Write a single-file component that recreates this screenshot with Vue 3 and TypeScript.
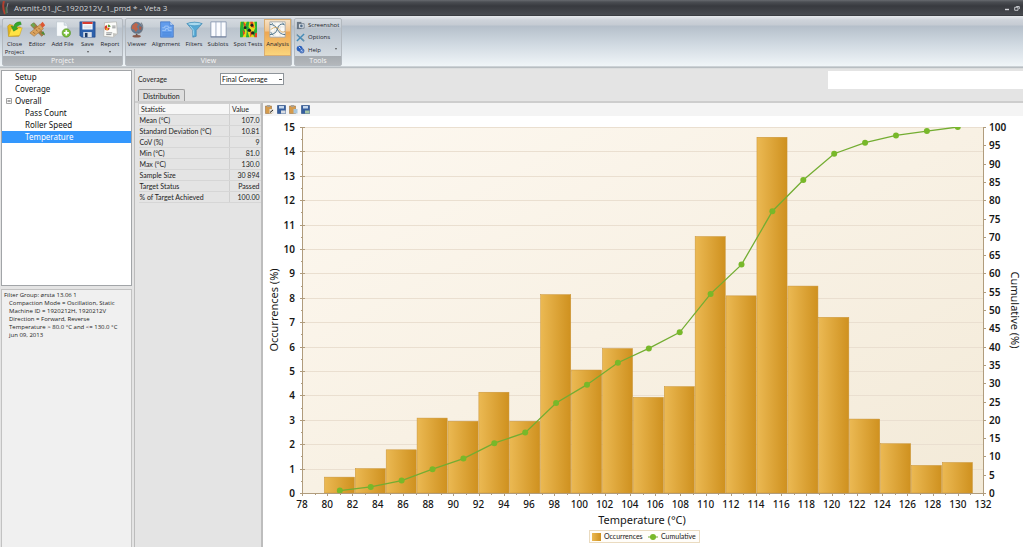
<script setup lang="ts">
import { ref } from 'vue'

interface RibbonItem { id: string; label: string; menu?: boolean }

const projectItems: RibbonItem[] = [
  { id: 'close', label: 'Close Project' },
  { id: 'editor', label: 'Editor' },
  { id: 'add', label: 'Add File' },
  { id: 'save', label: 'Save', menu: true },
  { id: 'report', label: 'Report', menu: true },
]
const viewItems: RibbonItem[] = [
  { id: 'viewer', label: 'Viewer' },
  { id: 'alignment', label: 'Alignment' },
  { id: 'filters', label: 'Filters' },
  { id: 'sublots', label: 'Sublots' },
  { id: 'spot', label: 'Spot Tests' },
  { id: 'analysis', label: 'Analysis' },
]
const groups = [
  { name: 'Project', cls: 'project', items: projectItems },
  { name: 'View', cls: 'view', items: viewItems },
]
const activeView = ref('analysis')

const tree = [
  { label: 'Setup', level: 0 },
  { label: 'Coverage', level: 0 },
  { label: 'Overall', level: 0, open: true },
  { label: 'Pass Count', level: 1 },
  { label: 'Roller Speed', level: 1 },
  { label: 'Temperature', level: 1 },
]
const selected = ref('Temperature')

const filterLines = [
  'Compaction Mode = Oscillation, Static',
  'Machine ID = 1920212H, 1920212V',
  'Direction = Forward, Reverse',
  'Temperature > 80.0 °C and <= 130.0 °C',
  'jun 09, 2013',
]

const stats: [string, string][] = [
  ['Mean (°C)', '107.0'],
  ['Standard Deviation (°C)', '10.81'],
  ['CoV (%)', '9'],
  ['Min (°C)', '81.0'],
  ['Max (°C)', '130.0'],
  ['Sample Size', '30 894'],
  ['Target Status', 'Passed'],
  ['% of Target Achieved', '100.00'],
]

const chartTools = ['Copy chart', 'Save chart', 'Copy data', 'Save data']
const coverage = ref('Final Coverage')

const plot = { left: 39, right: 720, top: 11, bottom: 377 }
const xOf = (t: number) => plot.left + ((t - 78) / 54) * (plot.right - plot.left)
const yOf = (v: number) => plot.bottom - (v / 15) * (plot.bottom - plot.top)
const yCum = (v: number) => plot.bottom - (v / 100) * (plot.bottom - plot.top)

const occurrences = [0.65, 1, 1.77, 3.07, 2.94, 4.13, 2.94, 8.13, 5.04, 5.92, 3.92, 4.36, 10.51, 8.08, 14.58, 8.48, 7.2, 3.03, 2.02, 1.13, 1.25]
const cumulative = [0.65, 1.65, 3.4, 6.5, 9.4, 13.6, 16.5, 24.6, 29.6, 35.6, 39.5, 43.9, 54.4, 62.4, 77, 85.5, 92.7, 95.7, 97.7, 98.9, 100]
const binWidth = 2.45
const bars = occurrences.map((v, i) => {
  const centre = 81 + i * binWidth
  const x = xOf(centre - binWidth / 2)
  return { x, y: yOf(v), w: xOf(centre + binWidth / 2) - x - 0.8, h: plot.bottom - yOf(v) }
})
const points = cumulative.map((v, i) => ({ x: xOf(81 + i * binWidth), y: yCum(v) }))
const linePoints = points.map((p) => `${p.x},${p.y}`).join(' ')
const yTicks = Array.from({ length: 16 }, (_, i) => i)
const cTicks = Array.from({ length: 21 }, (_, i) => i * 5)
const xTicks = Array.from({ length: 28 }, (_, i) => 78 + i * 2)
const snap = (v: number) => Math.round(v) + 0.5
</script>

<template>
  <div class="app">
    <header class="titlebar">
      <svg class="logo" viewBox="0 0 8 14" aria-hidden="true">
        <path d="M2 0 Q0 6 3 13" stroke="#b3402f" stroke-width="2" fill="none" />
        <path d="M6 2 Q4 7 5 12" stroke="#8e9297" fill="none" />
        <path d="M4 6 L4 13" stroke="#3f7d45" fill="none" />
      </svg>
      <span class="title">Avsnitt-01_JC_1920212V_1_pmd * - Veta 3</span>
      <button class="win" aria-label="Minimize"><svg viewBox="0 0 6 6"><path d="M1 4.5H5" stroke="#d4d6da" stroke-width="1.4" /></svg></button>
      <button class="win" aria-label="Restore"><svg viewBox="0 0 6 6"><path d="M2.2 1.5H5.3V4M.7 2.3H4V5.3H.7Z" stroke="#c4c6ca" fill="none" /></svg></button>
    </header>

    <nav class="ribbon">
      <section v-for="g in groups" :key="g.name" class="group">
        <div class="tools" :class="g.cls">
          <button v-for="it in g.items" :key="it.id" class="big" :class="{ active: it.id === activeView }">
            <svg viewBox="0 0 20 20" aria-hidden="true">
              <g v-if="it.id === 'close'">
                <path d="M2 6 4 4 8 5 9 7H17L15 18H3Z" fill="#e6b91d" stroke="#ab851a" stroke-width=".6" />
                <path d="M3 18 6 9 19 8 16 17Z" fill="#ffe345" stroke="#c99d1c" stroke-width=".6" />
                <path d="M17 1Q10 1 9 7L6 6 9 12 14 9 12 8Q13 5 18 4Z" fill="#35a82a" stroke="#1d7a1c" stroke-width=".5" />
              </g>
              <g v-else-if="it.id === 'editor'">
                <path d="M2 5 6 2 18 15 15 18Z" fill="#a9793f" stroke="#78502a" stroke-width=".6" />
                <path d="M1 14 13 4 17 9 6 18Z" fill="#d9a15c" stroke="#9f6a34" stroke-width=".6" />
                <path d="M13 4 16 1 19 5 16 8Z" fill="#dc5732" />
                <path d="M2 4 5 2 8 5 5 8Z" fill="#6fa551" />
                <path d="M14 14 19 17 17 12Z" fill="#4e8c3c" />
                <path d="M5 13 7 15M8 10 10 12M11 8 13 10" stroke="#7a4b25" stroke-width=".8" />
              </g>
              <g v-else-if="it.id === 'add'">
                <path d="M3 1H12L16 5V18H3Z" fill="#f7fafc" stroke="#b4bec8" stroke-width=".7" />
                <path d="M12 1V5H16" fill="#dce5ed" stroke="#b4bec8" stroke-width=".7" />
                <circle cx="14.5" cy="14" r="5" fill="#78bd38" stroke="#4b8d20" stroke-width=".6" />
                <path d="M14.500 11V17M11.500 14H17.500" stroke="#fff" stroke-width="2" />
              </g>
              <g v-else-if="it.id === 'save'">
                <path d="M1 1H19V19H3L1 17Z" fill="#2d60ab" stroke="#1a3e7d" stroke-width=".6" />
                <path d="M4 1H16V10H4Z" fill="#f7f8fa" />
                <path d="M4 1H16V3.500H4Z" fill="#d63b30" />
                <path d="M5.500 6H14.500M5.500 8H14.500" stroke="#bdc7d5" stroke-width=".7" />
                <path d="M5 13H15V19H5Z" fill="#d8e0ea" />
                <path d="M7 14H10V19H7Z" fill="#1c3966" />
              </g>
              <g v-else-if="it.id === 'report'">
                <path d="M3 2 17 1 18 15 13 19 2 18Z" fill="#fbfbf9" stroke="#a9a9a4" stroke-width=".7" />
                <path d="M13 19 13 14 18 15Z" fill="#c3c3bf" />
                <path d="M6 5A3 3 0 1 0 9 8H6Z" fill="#d53b2a" />
                <path d="M7 4A3 3 0 0 1 10 7H7Z" fill="#5b9c38" />
                <path d="M4 9A3 3 0 0 0 7 11V8Z" fill="#e8b42c" />
                <path d="M12 6H16M12 8H16M5 14H12M5 16H11" stroke="#777b7d" />
              </g>
              <g v-else-if="it.id === 'viewer'">
                <path d="M14 2A8 8 0 0 1 11 15" fill="none" stroke="#80868e" stroke-width="1.200" />
                <circle cx="9" cy="8" r="6.500" fill="#667b92" stroke="#46566a" stroke-width=".6" />
                <path d="M4 5 8 2 11 4 9 7 11 9 8 13 6 10 3 9Z" fill="#bd654c" />
                <path d="M12 6 15 7 14 11 12 10Z" fill="#a95b48" />
                <path d="M9 15V18" stroke="#6f5047" stroke-width="2" />
                <ellipse cx="9" cy="18" rx="5" ry="1.500" fill="#88594a" />
              </g>
              <g v-else-if="it.id === 'alignment'">
                <path d="M3 1H14L18 5V19H3Z" fill="#629cec" stroke="#3b70c1" stroke-width=".8" />
                <path d="M14 1V5H18" fill="#c1dafb" stroke="#3b70c1" stroke-width=".7" />
                <path d="M5 8H8V6H12V8H16M5 11H9V9H12V11H16" stroke="#a9cdfa" fill="none" />
                <path d="M5 14H16M5 16.500H16" stroke="#417fd4" />
              </g>
              <g v-else-if="it.id === 'filters'">
                <path d="M1 3Q10 0 19 3L12 11V18L8 19V11Z" fill="#55a8d4" stroke="#3480ae" stroke-width=".7" />
                <ellipse cx="10" cy="3.500" rx="8" ry="2" fill="#a9daef" stroke="#3887b2" stroke-width=".6" />
                <path d="M5 6 9 11V17" stroke="#b0e1f4" fill="none" />
              </g>
              <g v-else-if="it.id === 'sublots'">
                <path d="M1 1H19V19H1Z" fill="#fbfcff" stroke="#8493ae" />
                <path d="M7 1V19M13 1V19" stroke="#93a3bb" />
                <path d="M1 18.500H19" stroke="#6e7c97" />
              </g>
              <g v-else-if="it.id === 'spot'">
                <path d="M0 1H20V19H0Z" fill="#e5d91b" />
                <path d="M1 1H5L4 7 6 12 3 19H0V9ZM8 1H11L10 7 12 9 9 13 11 19H7L8 12 6 6ZM17 1H20V13L17 19 15 15 18 8Z" fill="#27af38" />
                <path d="M4 1 7 4 5 8ZM12 1H15L17 8 13 7ZM3 10 6 14 4 17ZM12 11 15 14 12 19ZM18 14H20V19H17Z" fill="#e64421" />
                <circle cx="6" cy="8" r="1.700" fill="#20251e" /><circle cx="14" cy="5" r="1.700" fill="#20251e" />
                <circle cx="11" cy="11" r="2" fill="#20251e" /><circle cx="15" cy="14" r="2" fill="#20251e" />
              </g>
              <g v-else>
                <path d="M1 1H19V19H1Z" fill="#fbfaf6" stroke="#9ea4aa" />
                <path d="M1 7H19M1 13H19M7 1V19M13 1V19" stroke="#d2d4d6" stroke-width=".6" />
                <path d="M1 4Q7 4 10 10T19 16M1 16Q8 16 10 9T18 4" stroke="#365e78" fill="none" />
                <path d="M2 10Q9 5 12 10T19 12" stroke="#d99c3c" fill="none" stroke-width=".8" />
                <path d="M3 2 5 4M16 2 18 5M2 13 5 17" stroke="#4b7790" />
              </g>
            </svg>
            <span>{{ it.label }}</span>
            <i v-if="it.menu" class="caret"></i>
          </button>
        </div>
        <h2>{{ g.name }}</h2>
      </section>
      <section class="group">
        <div class="small-tools">
          <button class="small">
            <svg viewBox="0 0 10 10"><path d="M1 1H6V9H1Z" fill="#687583" /><path d="M3 3H9V8H3Z" fill="#e7edf2" stroke="#596a7b" stroke-width=".8" /><circle cx="6" cy="5.500" r="1.500" fill="#506b89" /></svg>
            Screenshot
          </button>
          <button class="small">
            <svg viewBox="0 0 10 10"><path d="M1 2 9 9M9 1 1 9" stroke="#458bb7" stroke-width="1.600" /><path d="M1 1 3 4M7 6 9 9" stroke="#7e939e" /></svg>
            Options
          </button>
          <button class="small">
            <svg viewBox="0 0 10 10"><circle cx="4" cy="4" r="3.300" fill="#2b60bd" /><circle cx="6.500" cy="6.500" r="2.500" fill="#5c86cd" stroke="#244d9c" stroke-width=".6" /><path d="M3 2 5 4M6 6 7 7" stroke="#fff" /></svg>
            Help
            <i class="caret"></i>
          </button>
        </div>
        <h2>Tools</h2>
      </section>
    </nav>

    <div class="body">
      <aside>
        <ul class="tree">
          <li v-for="n in tree" :key="n.label">
            <button :class="['node', 'l' + n.level, { selected: n.label === selected }]" @click="selected = n.label">
              <span class="box"><svg v-if="n.open" viewBox="0 0 6 6"><path d="M.5 .5H5.500V5.500H.5Z" fill="#fafafa" stroke="#a2a2a2" /><path d="M1.500 3H4.500" stroke="#555" /></svg></span>{{ n.label }}
            </button>
          </li>
        </ul>
        <div class="filter">
          <p>Filter Group: ørsta 13.06 1</p>
          <p v-for="l in filterLines" :key="l" class="sub">{{ l }}</p>
        </div>
      </aside>

      <main>
        <div class="top">
          <div class="settings">
            <div class="field">
              <label for="coverage">Coverage</label>
              <select id="coverage" v-model="coverage"><option>Final Coverage</option></select>
            </div>
            <button class="tab">Distribution</button>
          </div>
          <div class="blank"></div>
        </div>

        <div class="content">
          <div class="stats">
            <table>
              <thead><tr><th>Statistic</th><th>Value</th></tr></thead>
              <tbody><tr v-for="s in stats" :key="s[0]"><td>{{ s[0] }}</td><td>{{ s[1] }}</td></tr></tbody>
            </table>
          </div>
          <div class="chart">
            <div class="chartbar">
              <button v-for="(t, i) in chartTools" :key="t" :aria-label="t">
                <svg viewBox="0 0 9 9">
                  <g v-if="i % 2 === 0"><path d="M.5 1H6.500V8.500H.5Z" fill="#d59b4c" stroke="#9c7443" stroke-width=".6" /><path d="M2 0H5V2H2Z" fill="#a9a297" /><path d="M4.500 4H8.500V8.500H4.500Z" :fill="i === 0 ? '#e4dfd5' : '#a9c7dd'" /><path v-if="i === 0" d="M5 7.500 8 5" stroke="#222" /></g>
                  <g v-else><path d="M.5 .5H8.500V8.500H.5Z" fill="#355e9e" stroke="#254a82" stroke-width=".6" /><path d="M2 1H7V3.500H2Z" fill="#c6d8ee" /><path d="M4 5.500H8.500V8.500H4Z" :fill="i === 1 ? '#d8dce2' : '#a6c4a4'" /></g>
                </svg>
              </button>
            </div>
            <svg class="plot" viewBox="0 0 760 431" role="img" aria-label="Temperature distribution">
              <defs>
                <linearGradient id="bg" x1="0" y1="0" x2="1" y2="1"><stop offset="0" stop-color="#fdf8f0" /><stop offset="1" stop-color="#f3ead8" /></linearGradient>
                <linearGradient id="bar" x1="0" x2="1" y1="0" y2="0"><stop offset="0" stop-color="#ebb953" /><stop offset="1" stop-color="#cf911f" /></linearGradient>
                <clipPath id="area"><rect :x="plot.left" :y="plot.top" width="681" height="366" /></clipPath>
              </defs>
              <rect :x="plot.left" :y="plot.top" width="681" height="366" fill="url(#bg)" />
              <g stroke="#eadfd0">
                <path v-for="t in yTicks" :key="t" :d="`M39 ${snap(yOf(t))}H720`" />
              </g>
              <g fill="url(#bar)">
                <rect v-for="(b, i) in bars" :key="i" :x="b.x" :y="b.y" :width="b.w" :height="b.h" stroke="#c99337" stroke-width=".5" />
              </g>
              <g stroke="#b09c7d">
                <path d="M39.500 11V377.500H720.500V11" fill="none" />
                <path v-for="t in yTicks" :key="'y' + t" :d="`M37 ${snap(yOf(t))}h5`" />
                <path v-for="t in 15" :key="'ym' + t" :d="`M38 ${snap(yOf(t - 0.5))}h2`" />
                <path v-for="t in cTicks" :key="'c' + t" :d="`M720 ${snap(yCum(t))}h3`" />
                <path v-for="t in xTicks" :key="'x' + t" :d="`M${snap(xOf(t))} 377v3`" />
                <path v-for="t in 27" :key="'xm' + t" :d="`M${snap(xOf(77 + t * 2))} 377v2`" />
              </g>
              <g clip-path="url(#area)">
                <polyline :points="linePoints" fill="none" stroke="#73ad32" stroke-width="1.300" />
                <circle v-for="(p, i) in points" :key="i" :cx="p.x" :cy="p.y" r="3" fill="#78b82a" />
              </g>
              <g class="side" text-anchor="end">
                <text v-for="t in yTicks" :key="t" x="32" :y="yOf(t) + 4">{{ t }}</text>
              </g>
              <g class="side">
                <text v-for="t in cTicks" :key="t" x="726" :y="yCum(t) + 4">{{ t }}</text>
              </g>
              <g class="below" text-anchor="middle">
                <text v-for="t in xTicks" :key="t" :x="xOf(t)" y="392">{{ t }}</text>
              </g>
              <g class="axis-title" text-anchor="middle">
                <text x="379" y="408">Temperature (°C)</text>
                <text transform="translate(15 194) rotate(-90)">Occurrences (%)</text>
                <text transform="translate(748 194) rotate(90)">Cumulative (%)</text>
              </g>
              <g class="legend">
                <rect x="326.500" y="414.500" width="110" height="12" fill="#fffdf9" stroke="#eadbc0" />
                <rect x="329" y="417" width="9" height="8" fill="url(#bar)" />
                <text x="341" y="423">Occurrences</text>
                <path d="M385 421H395" stroke="#73ad32" /><circle cx="390" cy="421" r="3" fill="#78b82a" />
                <text x="398" y="423">Cumulative</text>
              </g>
            </svg>
          </div>
        </div>
      </main>
    </div>
  </div>
</template>

<style>
body { background: #e4e4e4; }
</style>

<style scoped>
* { box-sizing: border-box; }
.app { min-height: 100vh; display: flex; flex-direction: column; font: 500 6px/8px "Open Sans", "Noto Sans", sans-serif; color: #1c1c1c; background: #e4e4e4; overflow: hidden; }
button { border: 0; padding: 0; margin: 0; background: none; font: inherit; color: inherit; cursor: pointer; }
svg { display: block; }
.titlebar { height: 16px; display: flex; align-items: center; padding: 0 1px 0 2px; background: linear-gradient(#686b70 0, #4b4e53 2px, #383a3f 6px, #484b50 15px, #2c2e32 16px); color: #d4d6d9; }
.logo { width: 8px; height: 14px; }
.title { flex: 1; padding-left: 4px; font-size: 8px; line-height: 10px; font-weight: 400; }
.win { width: 10px; display: flex; justify-content: center; }
.win svg { width: 6px; height: 6px; }
.ribbon { display: flex; gap: 2px; height: 53px; padding: 2px; background: linear-gradient(#e7eaed 0, #ced3da 4px, #c5cbd3 9px, #b5bfca 10px, #d0d9e1 28px, #f0f5f8 50px, #a7aeb4 51px, #c9cdcf 52px, #ededed 53px); }
.group { display: flex; flex-direction: column; height: 48px; border: 1px solid #b3b9bf; border-radius: 2px; background: linear-gradient(#d4d9df, #c8cfd6 8px, #bac3cd 9px, #dde3e8); }
.tools { flex: 1; display: grid; }
.project { grid-template-columns: 23px 22px 29px 21px 24px; }
.view { grid-template-columns: 22px 36px 20px 28px 32px 27px; }
.group h2 { margin: 0; height: 9px; background: linear-gradient(#a6abb0, #b3b7bb); color: #f7f7f7; font-size: 7px; line-height: 9px; font-weight: 400; text-align: center; }
.big { display: flex; flex-direction: column; align-items: center; padding-top: 2px; min-width: 0; text-align: center; color: #1d232b; }
.big svg { width: 17px; height: 17px; margin-bottom: 2px; flex: none; }
.big span { white-space: nowrap; }
.project .big:first-child span { white-space: normal; }
.active { background: linear-gradient(#f6e3c8 0, #f2c48c 12px, #eda653 13px, #fbd77d); box-shadow: inset 0 0 0 1px #d8ad72; }
.caret { width: 0; height: 0; border: 1px solid transparent; border-top: 2px solid #555; margin-top: 3px; }
.small-tools { flex: 1; display: flex; flex-direction: column; justify-content: space-around; width: 46px; }
.small { display: flex; align-items: center; gap: 3px; padding-left: 1px; color: #1d232b; white-space: nowrap; }
.small svg { width: 9px; height: 9px; flex: none; }
.small .caret { margin: 0 4px 0 auto; }
.body { flex: 1; display: flex; }
aside { width: 132px; display: flex; flex-direction: column; gap: 3px; padding: 1px 0 0 1px; flex: none; }
.tree { list-style: none; margin: 0; padding: 0; height: 216px; background: #fff; border: 1px solid #a2a5a8; font: 8px/12px "Noto Sans", sans-serif; }
.node { display: flex; align-items: center; width: 100%; height: 12px; text-align: left; color: #111; }
.box { width: 13px; padding-left: 4px; }
.box svg { width: 6px; height: 6px; }
.l1 { padding-left: 10px; }
.selected { background: #3397fd; color: #fff; }
.filter { flex: 1; border: 1px solid #c2c2c2; border-bottom: 0; background: #f0f0f0; padding: 1px 2px; }
.filter p { margin: 0; white-space: nowrap; }
.filter .sub { padding-left: 5px; }
main { flex: 1; min-width: 0; display: flex; flex-direction: column; margin-left: 2px; border-left: 1px solid #bcbcbc; font: 7px/8px Lato, "Open Sans", sans-serif; }
.top { display: flex; justify-content: space-between; height: 34px; border-bottom: 2px solid #cdcdcd; }
.settings { display: flex; flex-direction: column; justify-content: space-between; align-items: flex-start; padding: 4px 0 0 3px; }
.field { display: flex; align-items: center; }
.field label { width: 82px; }
select { appearance: none; width: 64px; height: 12px; border: 1px solid #8e949a; border-radius: 0; padding: 0 1px; color: #111; font: inherit; background: linear-gradient(#555, #555) 58px 5px / 3px 1px no-repeat #fff; }
.tab { height: 12px; padding: 0 4px; border: 1px solid #9c9c9c; border-bottom: 0; border-radius: 2px 2px 0 0; background: #dedede; }
.blank { width: 22%; height: 18px; margin-top: 2px; background: #fff; }
.content { flex: 1; display: flex; }
.stats { width: 128px; flex: none; padding-left: 3px; border-right: 2px solid #bdbdbd; }
table { width: 100%; border-collapse: collapse; table-layout: fixed; }
th { height: 11px; padding: 0 2px; background: #f6f6f6; border: 1px solid #d0d0d0; font-weight: 400; text-align: left; }
th:last-child { width: 31px; }
td { height: 11px; padding: 0 1px; border-bottom: 1px solid #d6d6d6; white-space: nowrap; }
td:last-child { text-align: right; border-left: 1px solid #d0d0d0; }
.chart { flex: 1; min-width: 0; background: #fff; }
.chartbar { display: flex; gap: 3px; align-items: center; height: 13px; padding-left: 2px; background: #f4f4f4; }
.chartbar svg { width: 9px; height: 9px; }
.plot { width: 100%; height: auto; }
.plot text { fill: #161616; font-family: "Noto Sans", sans-serif; }
.plot .side text { font-size: 10px; font-weight: 600; }
.plot .below text { font-size: 10px; font-weight: 500; }
.plot .axis-title text { font-size: 11px; }
.plot .legend text { font-family: Lato, sans-serif; font-size: 7px; }
</style>
